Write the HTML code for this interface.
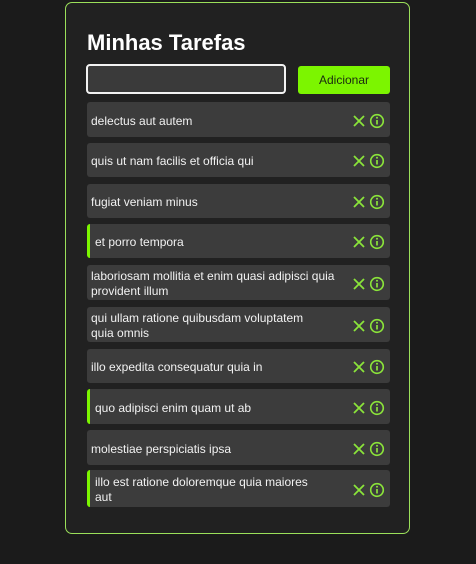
<!DOCTYPE html>
<html><head><style>
body{margin:0;width:476px;height:564px;background:#1b1b1b;font-family:"Liberation Sans",sans-serif;overflow:hidden;position:relative}
.card{position:absolute;left:65px;top:2px;width:345px;height:532px;border:1px solid #9be05a;border-radius:7px;background:#212121;box-sizing:border-box}
h1{position:absolute;left:21px;top:27px;margin:0;font-size:22px;color:#fff;font-weight:bold}
.inp{position:absolute;left:20px;top:61px;width:200px;height:30px;box-sizing:border-box;border:2px solid #f2f2f2;border-radius:4px;background:#3a3a3a}
.btn{position:absolute;left:232px;top:63px;width:92px;height:28px;background:#7cf500;border-radius:3px;color:#1a2a10;font-size:12px;text-align:center;line-height:28px}
.it{position:absolute;left:21px;width:303px;background:#3c3c3c;border-radius:3px;color:#f2f2f2;font-size:12px;display:flex;align-items:center;padding-left:3px;padding-top:3px;box-sizing:border-box;line-height:15px}
.it.g{border-left:3px solid #7cf500;padding-left:4px}
.it span{width:255px;white-space:nowrap}
.ic{position:absolute;right:4px;top:50%;margin-top:-7px;width:36px;height:16px}
</style></head><body>
<div class="card">
<h1>Minhas Tarefas</h1>
<div class="inp"></div>
<div class="btn">Adicionar</div>
</div>
<div id="l"></div>
<script>
var items=[[102,35,"delectus aut autem",0],[143,34,"quis ut nam facilis et officia qui",0],[184,34,"fugiat veniam minus",0],[224,34,"et porro tempora",1],[265,35,"laboriosam mollitia et enim quasi adipisci quia<br>provident illum",0],[307,35,"qui ullam ratione quibusdam voluptatem<br>quia omnis",0],[349,34,"illo expedita consequatur quia in",0],[389,35,"quo adipisci enim quam ut ab",1],[430,35,"molestiae perspiciatis ipsa",0],[470,37,"illo est ratione doloremque quia maiores<br>aut",1]];
var h="";
items.forEach(function(a){h+='<div class="it'+(a[3]?' g':'')+'" style="left:87px;top:'+a[0]+'px;height:'+a[1]+'px"><span style="padding-left:1px">'+a[2]+'</span><svg class="ic" viewBox="0 0 36 16"><path d="M4 3L14 13M14 3L4 13" stroke="#8be43a" stroke-width="1.8" fill="none"/><circle cx="27" cy="8" r="6.3" stroke="#8be43a" stroke-width="1.6" fill="none"/><path d="M27 7v4.5" stroke="#8be43a" stroke-width="1.7"/><circle cx="27" cy="4.8" r="1" fill="#8be43a"/></svg></div>'});
document.getElementById("l").innerHTML=h;
</script>
</body></html>
